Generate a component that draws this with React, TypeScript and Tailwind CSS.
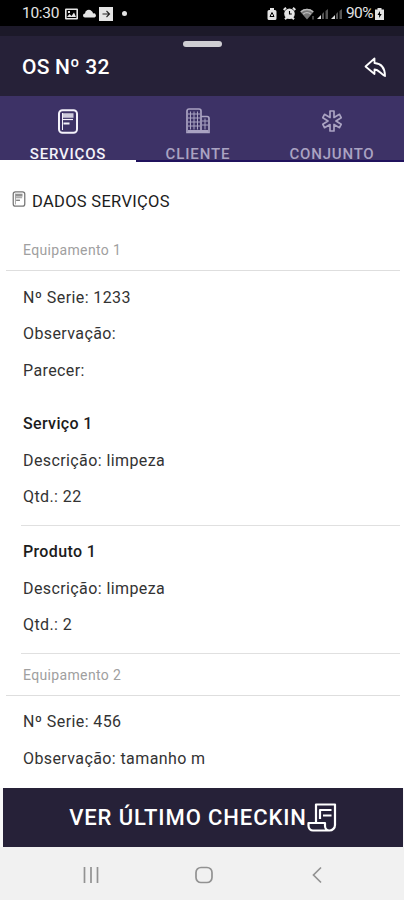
import React from 'react';

interface Item {
    title: string;
    description: string;
    quantity: number;
}

const items: Item[] = [
    { title: 'Serviço 1', description: 'limpeza', quantity: 22 },
    { title: 'Produto 1', description: 'limpeza', quantity: 2 },
];

const StatusBar = () => (
    <div className="h-[26px] shrink-0 bg-black text-[#e4e4e4] flex items-center justify-between pl-[22px] pr-[20px] pt-px">
        <div className="flex items-center">
            <span className="text-[15.5px] w-[38px] tracking-[-0.3px] whitespace-nowrap">10:30</span>
            <svg className="ml-[5px]" width="13" height="12" viewBox="0 0 13 12">
                <path fillRule="evenodd" fill="currentColor" d="M1 .5h11a1 1 0 0 1 1 1v9a1 1 0 0 1-1 1H1a1 1 0 0 1-1-1v-9a1 1 0 0 1 1-1zM1.6 2v8h9.8V2z" />
                <path fill="currentColor" d="M2 9l2.500-3 2 2L9 4.500 11 9zM3 3h2v2H3z" />
            </svg>
            <svg className="ml-[5px]" width="13" height="9" viewBox="0 0 13 9">
                <path fill="currentColor" d="M2 8.500a2 2 0 0 1 0-4 3.800 3.800 0 0 1 6.500-2.500 3 3 0 0 1 1.500 2.500 2 2 0 0 1 1.500 4z" />
            </svg>
            <svg className="ml-[3px]" width="14" height="14" viewBox="0 0 14 14">
                <path fill="currentColor" d="M0 0h14v14H0z" />
                <path fill="none" stroke="#222" strokeWidth="1.100" d="M3.500 7h7M7.500 4l3 3-3 3" />
            </svg>
            <span className="ml-[9px] size-[5px] rounded-full bg-current" />
        </div>
        <div className="flex items-center">
            <svg width="10" height="14" viewBox="0 0 10 14">
                <path fill="currentColor" d="M3 1h4v2h1a1.500 1.500 0 0 1 1.500 1.500v7A1.500 1.500 0 0 1 8 13H2A1.500 1.500 0 0 1 .5 11.500v-7A1.500 1.500 0 0 1 2 3h1z" />
                <path fill="none" stroke="#000" d="M3 9.500L5 5.500l2 4z" />
            </svg>
            <svg className="ml-[6px]" width="13" height="13" viewBox="0 0 13 13">
                <path stroke="currentColor" strokeWidth="2" d="M.7 3L3 .8M12.300 3L10 .8M2 12.300l2-2M11 12.300l-2-2" />
                <circle cx="6.500" cy="6.700" r="5.300" fill="currentColor" />
                <path fill="none" stroke="#000" strokeWidth="1.100" d="M6.500 4v3h2.300" />
            </svg>
            <svg className="ml-[4px]" width="15" height="12" viewBox="0 0 15 12">
                <path fill="#777" d="M0 3.500a10 10 0 0 1 14 0l-7 8z" />
                <path fill="none" stroke="#bbb" strokeWidth="1.300" d="M1 3.800a9 9 0 0 1 12 0M3.200 6.200a5.500 5.500 0 0 1 7.600 0" />
                <path stroke="#888" d="M13 8v3.500" />
            </svg>
            {[0, 1].map(n => (
                <svg key={n} className="ml-[2px]" width="12" height="13" viewBox="0 0 12 13">
                    <path fill="#ddd" d="M0 12l4-4v4z" />
                    <path fill="#555" d="M5 7l2-2v7H5zM8.500 4l2.500-2v10H8.500z" />
                </svg>
            ))}
            <span className="ml-[3px] text-[15.5px] w-[29px] tracking-[-0.6px] whitespace-nowrap">90%</span>
            <svg width="9" height="12" viewBox="0 0 9 12">
                <path fill="currentColor" d="M2.500 0h4v1.500H9V12H0V1.500h2.500z" />
                <path fill="#000" d="M5 3L2.500 7h1.700L4 10l2.700-4H5z" />
            </svg>
        </div>
    </div>
);

const DocIcon = ({ className }: { className?: string }) => (
    <svg className={className} viewBox="0 0 20 25" fill="none" stroke="currentColor">
        <rect x="1" y="1.200" width="18" height="22.600" rx="3.500" strokeWidth="2" />
        <path strokeWidth="1" d="M4.500 4v17" />
        <path strokeWidth="4.500" opacity="0.8" d="M5 6.500h10.500" />
        <path strokeWidth="1.200" d="M5 10.500h10" />
        <path strokeWidth="2" d="M5.500 14.500h6" />
    </svg>
);

const BuildingIcon = () => (
    <svg className="shrink-0" width="24" height="26" viewBox="0 0 24 26" fill="none" stroke="currentColor">
        <path strokeWidth="1.700" d="M15 24.500H1V3a2 2 0 0 1 2-2h10a2 2 0 0 1 2 2zM15 8.500h6a2 2 0 0 1 2 2v14h-8" />
        <path strokeWidth="1" d="M4.500 3.500v18M8 3.500v18M11.500 3.500v18M2 6h12M2 10h12M2 14h12M2 18h12M19 10.500v11M16 13h6M16 17h6" />
        <path strokeWidth="2" d="M2 23h20" />
    </svg>
);

const AsteriskIcon = () => (
    <svg className="shrink-0" width="20" height="22" viewBox="0 0 20 22" fill="none" stroke="currentColor" strokeWidth="1.700" strokeLinejoin="round">
        <path d="M8 1h4v6.500l5.500-3.200 1.700 3.400L14 11l5.200 3.300-1.700 3.400L12 14.500V21H8v-6.500l-5.500 3.200-1.700-3.400L6 11 .8 7.700l1.700-3.400L8 7.500z" />
    </svg>
);

const ScrollIcon = () => (
    <svg width="30" height="29" viewBox="0 0 30 29" fill="none" stroke="currentColor" strokeWidth="2.200" strokeLinejoin="round">
        <path d="M9 19.500V1.500h19V22a5.500 5.500 0 0 1-5.500 5.500H6A4.500 4.500 0 0 1 1.500 23v-3H18v3a4.500 4.500 0 0 0 4.500 4.500" />
        <path d="M13 16V7h11.500M16 12.500h8.500" />
    </svg>
);

const Row = ({ children, bold }: { children: React.ReactNode; bold?: boolean }) => (
    <div className={`h-[36.6px] flex items-center pl-[23px] text-base whitespace-pre ${bold ? 'font-medium tracking-[0.35px] text-[#1c1c1c]' : 'tracking-[0.4px] text-[#333]'}`}>
        {children}
    </div>
);

const EquipmentHeader = ({ number }: { number: number }) => (
    <div className="ml-[6px] mr-[4px] pl-[17px] h-[42px] flex items-center border-b border-[#dedede] text-sm tracking-[0.35px] text-[#a0a0a0]">
        Equipamento {number}
    </div>
);

const App: React.FC = () => {
    return (
        <div className="w-[404px] h-[900px] flex flex-col overflow-hidden bg-white font-['Roboto',sans-serif]">
            <StatusBar />

            <header className="h-[70px] shrink-0 bg-[#262138] border-t-[10px] border-[#1c1929] flex flex-col">
                <div className="mt-[5px] mx-auto w-[39px] h-[6px] rounded-full bg-[#cfced3]" />
                <div className="flex items-center justify-between pl-[22px] pr-[17px] pt-[6px]">
                    <h1 className="text-[21px] leading-[28px] font-medium tracking-[0.2px] text-white">OS Nº 32</h1>
                    <svg width="23" height="21" viewBox="0 0 23 21" fill="none" stroke="#fff" strokeWidth="1.800" strokeLinejoin="round">
                        <path d="M10.500 1.500L1.500 9.500l9 7.500v-4.500c4 0 6 4 10.500 6.500 0-8-4-12.500-10.500-13z" />
                    </svg>
                </div>
            </header>

            <nav className="h-[66px] shrink-0 bg-[#3d3266] grid grid-cols-[136px_124px_144px] grid-rows-[66px] text-[#aaa3c2] text-[15px] font-medium">
                <div className="flex flex-col items-center pt-[13px] text-[#f4f2fa] border-b-2 border-white overflow-hidden">
                    <DocIcon className="w-[20px] h-[25px] shrink-0" />
                    <span className="mt-[9px] leading-[22px] tracking-[0.8px]">SERVIÇOS</span>
                </div>
                <div className="flex flex-col items-center pt-[12px] border-b-2 border-[#20125d] overflow-hidden">
                    <BuildingIcon />
                    <span className="mt-[9px] leading-[22px] tracking-[0.9px]">CLIENTE</span>
                </div>
                <div className="flex flex-col items-center pt-[14px] border-b-2 border-[#20125d] overflow-hidden">
                    <AsteriskIcon />
                    <span className="mt-[11px] leading-[22px] tracking-[0.8px]">CONJUNTO</span>
                </div>
            </nav>

            <main className="flex-1 min-h-0 overflow-hidden">
                <div className="h-[67px] pt-[28px] pl-[12px] flex items-start">
                    <DocIcon className="w-[14px] h-[16px] mt-px text-[#777]" />
                    <h2 className="ml-[6px] text-[16.5px] leading-[24px] tracking-[0.3px] text-[#1c1c1c]">DADOS SERVIÇOS</h2>
                </div>

                <EquipmentHeader number={1} />
                <div className="pt-[8.600px] pb-[16.400px]">
                    <Row>Nº Serie: 1233</Row>
                    <Row>Observação:</Row>
                    <Row>Parecer:</Row>
                </div>
                {items.map(item => (
                    <React.Fragment key={item.title}>
                        <div className="h-[110px]">
                            <Row bold>{item.title}</Row>
                            <Row>Descrição: {item.description}</Row>
                            <Row>Qtd.: {item.quantity}</Row>
                        </div>
                        <div className="ml-[21px] mr-[4px] mt-[9px] mb-[8.200px] h-px bg-[#e0e0e0]" />
                    </React.Fragment>
                ))}
                <div className="-mt-[8px]">
                    <EquipmentHeader number={2} />
                </div>
                <div className="pt-[8px]">
                    <Row>Nº Serie: 456</Row>
                    <Row>Observação: tamanho m</Row>
                </div>
            </main>

            <footer className="shrink-0">
                <div className="bg-[#f8f8f8] pl-[3px] pr-px">
                    <button className="w-full h-[59px] bg-[#262138] flex items-center justify-center text-white">
                        <span className="text-[22px] font-medium tracking-[0.9px] whitespace-nowrap">VER ÚLTIMO CHECKIN</span>
                        <ScrollIcon />
                    </button>
                </div>
                <div className="h-[53px] bg-[#f1f1f1] text-[#929292]">
                    <svg width="404" height="53" viewBox="0 0 404 53" fill="none" stroke="currentColor" strokeWidth="1.700">
                        <path d="M84.500 20v16M91 20v16M97.500 20v16M321 20.500l-7.500 7.500 7.500 7.500" />
                        <rect x="196" y="20.500" width="16" height="15" rx="5" />
                    </svg>
                </div>
            </footer>
        </div>
    );
};

export default App;
